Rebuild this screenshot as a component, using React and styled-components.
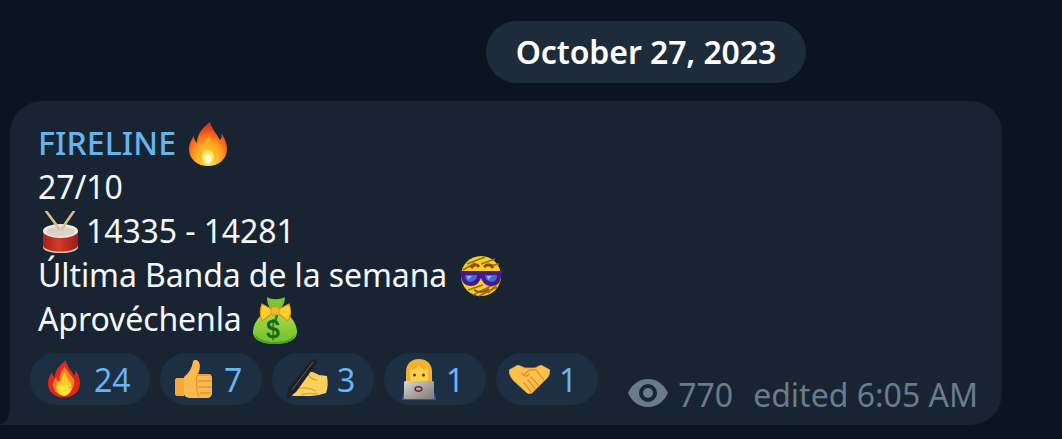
import styled, { createGlobalStyle } from 'styled-components'

const GlobalStyle = createGlobalStyle`
    html, body {
        margin: 0;
        height: 100%;
        overflow: hidden;
        background: #0d1421;
        font-family: "Noto Sans", "Open Sans", sans-serif;
    }
`

const Page = styled.div`
    width: 1062px;
    height: 439px;
    overflow: hidden;
    padding-top: 21px;
    box-sizing: border-box;
    background: #0d1421;
`

const DateRow = styled.div`
    display: flex;
    padding-left: 486px;
    margin-bottom: 18px;
`

const DatePill = styled.div`
    width: 320px;
    height: 62px;
    padding-bottom: 2px;
    box-sizing: border-box;
    border-radius: 31px;
    background: #1e2b3a;
    color: #fff;
    font-size: 32px;
    font-weight: 600;
    letter-spacing: -0.1px;
    display: flex;
    align-items: center;
    justify-content: center;
`

const Bubble = styled.div`
    position: relative;
    width: 992px;
    height: 324px;
    margin-left: 10px;
    box-sizing: border-box;
    padding: 19px 24px 0 20px;
    background: #182431;
    border-radius: 32px 32px 32px 0;
`

const Tail = styled.svg`
    position: absolute;
    left: -10px;
    bottom: 0;
    width: 10px;
    height: 20px;
`

const Body = styled.div`
    padding-left: 8px;
    margin-bottom: 13px;
`

const Line = styled.div`
    display: flex;
    align-items: center;
    height: 44px;
    gap: ${p => p.$gap || 0}px;
    padding-left: ${p => p.$indent || 0}px;
    color: #f5f8fa;
    font-size: 32px;
    letter-spacing: -0.1px;
    white-space: nowrap;

    svg {
        margin-top: 4px;
    }
`

const Name = styled.span`
    color: #64b5ef;
    font-weight: 500;
    letter-spacing: 0.1px;
`

const Footer = styled.div`
    display: flex;
    justify-content: space-between;
    align-items: flex-end;
`

const Reactions = styled.div`
    display: flex;
    gap: 10px;
`

const Reaction = styled.div`
    display: flex;
    align-items: center;
    box-sizing: border-box;
    width: ${p => p.$wide ? 120 : 102}px;
    height: 52px;
    padding-left: ${p => p.$inset}px;
    border-radius: 26px;
    background: #1d2f42;
    color: #6ab3f3;
    font-size: 32px;
`

const Count = styled.span`
    margin-left: ${p => p.$gap}px;
`

const Meta = styled.div`
    display: flex;
    align-items: center;
    height: 40px;
    margin-bottom: -9px;
    color: #6a7b8c;
    font-size: 32px;
`

const Views = styled.span`
    margin: 0 20px 0 10px;
`

const Emoji = styled.svg`
    flex: none;
    display: block;
    width: ${p => p.$w}px;
    height: ${p => p.$h}px;
`

const Eye = styled.svg`
    display: block;
    width: 40px;
    height: 28px;
    margin-top: -3px;
`

const Fire = ({ w = 38, h = 44, hot }) => (
    <Emoji $w={w} $h={h} viewBox="0 0 38 44">
        <defs>
            <radialGradient id="flame" cx="50%" cy="82%" r="75%">
                <stop offset="0" stopColor="#fffbd0" />
                <stop offset="0.22" stopColor="#ffd83c" />
                <stop offset="0.5" stopColor="#ff9a1c" />
                <stop offset="0.8" stopColor="#f2541b" />
                <stop offset="1" stopColor="#d9301c" />
            </radialGradient>
        </defs>
        <path d="M21 0C23 8 28 12 31 18C33 16 33 14 32 11C36 16 38 22 38 27C38 37 30 44 19 44C8 44 0 37 0 27C0 22 2 18 5 14C5 17 6 19 8 21C8 12 14 5 21 0Z" fill={hot ? '#e2261c' : 'url(#flame)'} />
        {hot && <path d="M20 7C22 13 28 17 31 23C32 31 27 41 19 41C10 41 5 34 6 27C7 24 8 22 10 20C10 23 11 25 13 26C13 19 16 12 20 7Z" fill="#f6821f" />}
        <path d="M20 14C21 20 27 23 28 30C29 37 24 42 19 42C13 42 9 37 10 31C10 28 12 26 13 24C14 26 14 27 15 28C15 23 17 18 20 14Z" fill={hot ? '#ffc928' : '#ffae21'} opacity={hot ? 1 : 0.75} />
        <ellipse cx="19" cy="35" rx="6" ry="7" fill={hot ? '#ffe43c' : '#ffe95c'} />
        {!hot && <ellipse cx="19" cy="37" rx="3.5" ry="4.5" fill="#fffbd2" />}
    </Emoji>
)

const Drum = () => (
    <Emoji $w={37} $h={42} viewBox="0 0 37 42">
        <path d="M4 0L19 20M32 0L18 20" stroke="#d9bb85" strokeWidth="2.4" strokeLinecap="round" />
        <defs>
            <linearGradient id="shell" x1="0" y1="0" x2="1" y2="0">
                <stop offset="0" stopColor="#a61f16" />
                <stop offset="0.45" stopColor="#d33a2a" />
                <stop offset="1" stopColor="#9c1c14" />
            </linearGradient>
        </defs>
        <path d="M1 20V35C1 39 9 42 18.5 42C28 42 36 39 36 35V20Z" fill="url(#shell)" />
        <path d="M1 34C1 38 9 40.5 18.5 40.5C28 40.5 36 38 36 34V36C36 40 28 42 18.5 42C9 42 1 40 1 36Z" fill="#cfc3b2" />
        <ellipse cx="18.5" cy="20" rx="17.5" ry="7" fill="#efe9df" />
        <ellipse cx="18.5" cy="20.5" rx="14" ry="5" fill="#d9d2c6" />
        <path d="M4 0L17 18M32 0L20 18" stroke="#d9bb85" strokeWidth="2" strokeLinecap="round" />
    </Emoji>
)

const CoolFace = () => (
    <Emoji $w={44} $h={42} viewBox="0 0 44 42">
        <circle cx="22" cy="21" r="20" fill="#f5cf24" />
        <path d="M8 9L26 2M4 15L16 8M22 9L36 4M30 11L40 9M29 38L41 26M9 35L24 30M14 40L34 30M20 41L38 32" stroke="#a5691a" strokeWidth="1.7" />
        <path d="M12 13C15 9 18 9 20 12M25 12C28 9 32 9 34 13" stroke="#8c4a12" strokeWidth="3" fill="none" />
        <path d="M0 16H44L42 20C42 27 38 31 32 31C27 31 24 28 22 23C20 28 17 31 12 31C6 31 2 27 2 20Z" fill="#46198a" />
        <path d="M6 20H18C18 24 15 27 11 27C8 27 6 24 6 20ZM26 20H38C38 24 36 27 33 27C29 27 26 24 26 20Z" fill="#3f6ad0" />
        <path d="M8 21L13 21L9 25ZM28 21L33 21L29 25Z" fill="#8fb4f2" />
        <path d="M15 35C20 38 26 37 30 34" stroke="#8c4a12" strokeWidth="2" fill="none" />
    </Emoji>
)

const MoneyBag = () => (
    <Emoji $w={44} $h={48} viewBox="0 0 44 48">
        <defs>
            <linearGradient id="sack" x1="0" y1="0" x2="0" y2="1">
                <stop offset="0" stopColor="#b5de45" />
                <stop offset="1" stopColor="#6cc02f" />
            </linearGradient>
        </defs>
        <path d="M14 1C19 4 26 4 32 1C32 6 30 10 27 13H18C15 10 14 6 14 1Z" fill="#7cc431" />
        <path d="M16 13C6 19 0 28 0 36C0 44 9 48 22 48C35 48 44 44 44 36C44 28 38 19 28 13Z" fill="url(#sack)" />
        <path d="M2 38C5 44 13 46 22 46C31 46 39 44 42 38C42 44 34 48 22 48C10 48 2 44 2 38Z" fill="#4f9c22" />
        <path d="M22 15L9 8C7 13 7 20 9 25ZM22 15L36 8C38 13 38 20 35 25Z" fill="#fbd22f" stroke="#dd8f1c" strokeWidth="1.2" />
        <rect x="18" y="11" width="8" height="8" rx="2" fill="#f7b92a" stroke="#dd8f1c" strokeWidth="0.8" />
        <path d="M24 19L22 26" stroke="#1d7a24" strokeWidth="2.5" />
        <text x="20" y="42" textAnchor="middle" fontSize="25" fontWeight="700" fontFamily="Liberation Sans, sans-serif" fill="#136b1d">$</text>
    </Emoji>
)

const Thumb = () => (
    <Emoji $w={37} $h={38} viewBox="0 0 37 38">
        <path d="M2 18H9V36H2C1 36 0 35 0 34V20C0 19 1 18 2 18Z" fill="#f6a93a" />
        <path d="M9 17C14 13 17 8 18 2C18 0 21 -1 23 1C26 4 25 10 23 14H33C36 14 37 16 37 18V33C37 36 35 38 32 38H16C12 38 9 36 9 34Z" fill="#f9b94c" />
        <path d="M24 15H35M24 21H36M24 27H36M25 33H35" stroke="#e2923a" strokeWidth="1.5" strokeLinecap="round" />
        <path d="M23 14C21 17 21 20 22 23C21 27 22 32 24 37" stroke="#e2923a" strokeWidth="1.2" fill="none" />
    </Emoji>
)

const WritingHand = () => (
    <Emoji $w={42} $h={40} viewBox="0 0 42 40">
        <path d="M3 31C7 23 13 15 21 13C26 12 29 14 33 16L41 17C42 23 42 29 40 34C34 36 29 37 23 37H9C6 37 4 36 3 34Z" fill="#fcd05f" />
        <path d="M11 30C17 28 24 29 30 32M15 36C20 34 26 34 32 35M21 13C23 18 27 21 31 21" stroke="#dfa03a" strokeWidth="1.3" fill="none" />
        <path d="M26 1C29 -1 32 1 31 4L10 33L1 40L2 29Z" fill="#1d2025" />
        <path d="M27 3L6 31" stroke="#5b6068" strokeWidth="1" />
    </Emoji>
)

const Technologist = () => (
    <Emoji $w={34} $h={41} viewBox="0 0 34 41">
        <path d="M0 41C0 31 8 27 17 27C26 27 34 31 34 41Z" fill="#3651c4" />
        <path d="M4 13C4 4 10 0 17 0C24 0 30 4 30 13V22H4Z" fill="#f2b133" />
        <path d="M8 11C12 11 15 10 17 7C20 10 23 11 26 11V18C26 23 22 26 17 26C12 26 8 23 8 18Z" fill="#fbd14a" />
        <circle cx="12.5" cy="16" r="1.5" fill="#533" />
        <circle cx="21.5" cy="16" r="1.5" fill="#533" />
        <defs>
            <linearGradient id="lid" x1="0" y1="0" x2="1" y2="1">
                <stop offset="0" stopColor="#d9d5d1" />
                <stop offset="1" stopColor="#7d7775" />
            </linearGradient>
        </defs>
        <rect x="2" y="22" width="30" height="18" rx="1.5" fill="url(#lid)" />
        <ellipse cx="16.5" cy="30" rx="3.4" ry="2.2" fill="none" stroke="#6e2730" strokeWidth="1.5" />
    </Emoji>
)

const Handshake = () => (
    <Emoji $w={41} $h={29} viewBox="0 0 41 29">
        <path d="M0 5L9 0L16 3H26L32 0L41 5C41 10 38 14 35 16L23 28C21 29 19 29 17 27L5 16C2 13 0 9 0 5Z" fill="#fbc24a" stroke="#eb9d2e" strokeWidth="0.8" />
        <path d="M15 10L20 5H27L35 15M22 12L30 21M19 15L26 24M15 18L22 27M13 8C15 12 18 12 20 9" stroke="#e2923a" strokeWidth="1.4" fill="none" strokeLinecap="round" />
    </Emoji>
)

const reactions = [
    { icon: <Fire w={32} h={40} hot />, count: 24, wide: true, inset: 18, gap: 14 },
    { icon: <Thumb />, count: 7, inset: 15, gap: 12 },
    { icon: <WritingHand />, count: 3, inset: 14, gap: 9 },
    { icon: <Technologist />, count: 1, inset: 18, gap: 10 },
    { icon: <Handshake />, count: 1, inset: 13, gap: 9 },
]

const App = () => {
    return (
        <Page>
            <GlobalStyle />
            <DateRow>
                <DatePill>October 27, 2023</DatePill>
            </DateRow>
            <Bubble>
                <Tail viewBox="0 0 10 20">
                    <path d="M10 0V20H0C6 18 10 12 10 0Z" fill="#182431" />
                </Tail>
                <Body>
                    <Line $gap={13}><Name>FIRELINE</Name><Fire /></Line>
                    <Line>27/10</Line>
                    <Line $gap={7} $indent={4}><Drum />14335 - 14281</Line>
                    <Line $gap={12}>Última Banda de la semana <CoolFace /></Line>
                    <Line $gap={11}>Aprovéchenla <MoneyBag /></Line>
                </Body>
                <Footer>
                    <Reactions>
                        {reactions.map((r, i) => (
                            <Reaction key={i} $wide={r.wide} $inset={r.inset}>
                                {r.icon}
                                <Count $gap={r.gap}>{r.count}</Count>
                            </Reaction>
                        ))}
                    </Reactions>
                    <Meta>
                        <Eye viewBox="0 0 40 28">
                            <path fillRule="evenodd" fill="#6a7b8c" d="M20 0C30 0 37 7 40 14C37 21 30 28 20 28C10 28 3 21 0 14C3 7 10 0 20 0ZM20 5A9 9 0 1 0 20 23A9 9 0 1 0 20 5ZM20 9A5 5 0 1 1 20 19A5 5 0 1 1 20 9Z" />
                        </Eye>
                        <Views>770</Views>
                        edited 6:05 AM
                    </Meta>
                </Footer>
            </Bubble>
        </Page>
    )
}

export default App
